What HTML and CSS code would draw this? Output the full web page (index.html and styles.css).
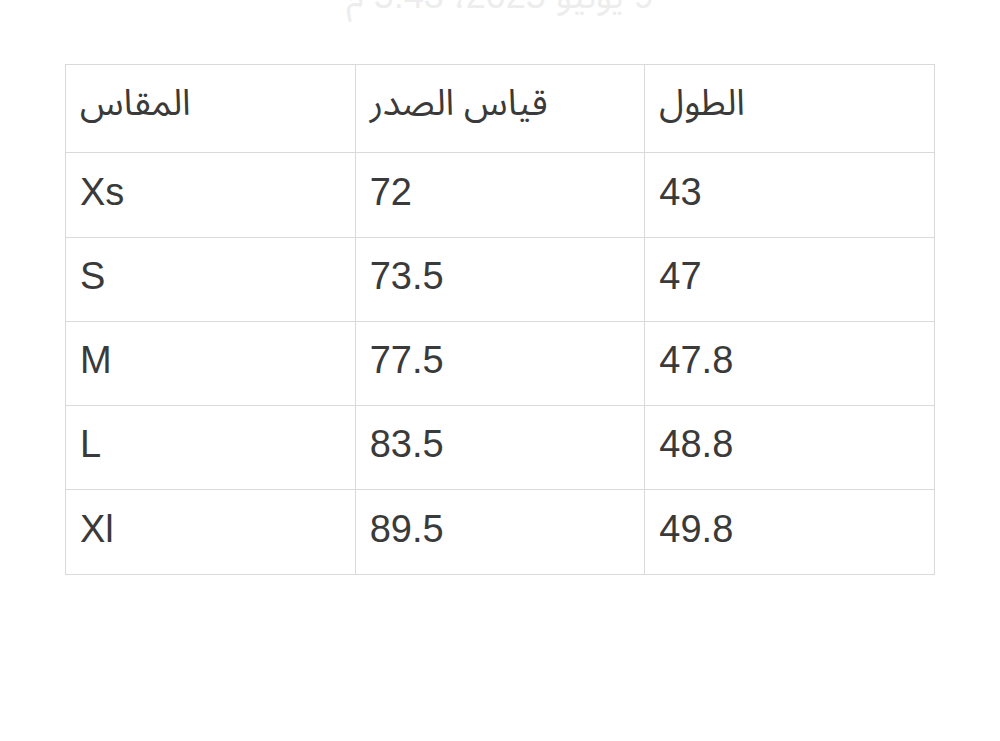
FILE: index.html
```html
<!DOCTYPE html>
<html lang="ar">
<head>
<meta charset="utf-8">
<link rel="stylesheet" href="styles.css">
</head>
<body>
<div class="page">
  <div class="date">9 يونيو 2025، 5:43 م</div>
  <table class="sizes">
    <tr class="head">
      <td>المقاس</td>
      <td>قياس الصدر</td>
      <td>الطول</td>
    </tr>
    <tr class="tall"><td>Xs</td><td>72</td><td>43</td></tr>
    <tr><td>S</td><td>73.5</td><td>47</td></tr>
    <tr><td>M</td><td>77.5</td><td>47.8</td></tr>
    <tr><td>L</td><td>83.5</td><td>48.8</td></tr>
    <tr class="tall"><td>Xl</td><td>89.5</td><td>49.8</td></tr>
  </table>
</div>
</body>
</html>
```
FILE: styles.css
```css
html, body {
  margin: 0;
  padding: 0;
  background: #ffffff;
}
.page {
  width: 1000px;
  height: 741px;
  overflow: hidden;
  font-family: "Liberation Sans", "Noto Sans Arabic", "DejaVu Sans", sans-serif;
  color: #3a3a3a;
}
.date {
  direction: rtl;
  text-align: center;
  font-size: 36px;
  line-height: 40px;
  margin-top: -24px;
  color: #ededed;
}
.sizes {
  margin: 48px 0 0 65px;
  border-collapse: collapse;
  width: 870px;
  table-layout: fixed;
}
.sizes td {
  border: 1px solid #dadada;
  height: 84px;
  padding: 0 14px 6px 14px;
  box-sizing: border-box;
  font-size: 38px;
  vertical-align: middle;
  text-align: left;
}
.sizes .tall td {
  height: 85px;
}
.sizes .head td {
  height: 88px;
  padding-bottom: 10px;
  font-size: 36px;
}
```
